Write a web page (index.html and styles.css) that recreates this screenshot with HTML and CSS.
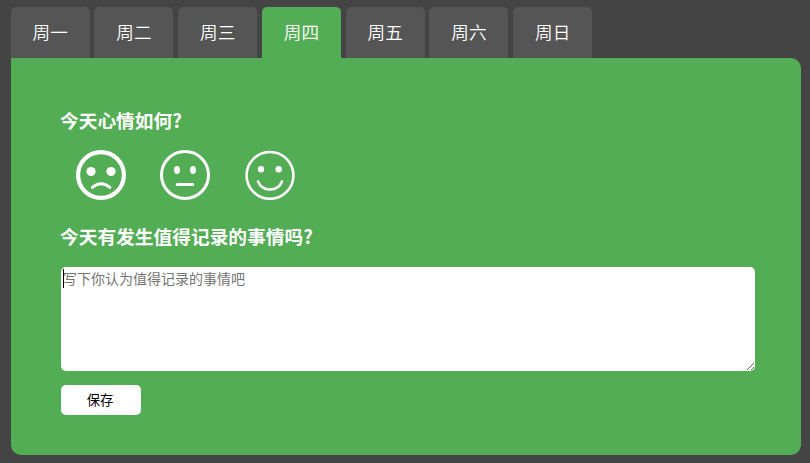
FILE: index.html
```
<!DOCTYPE html>
<html lang="zh-CN">
<head>
<meta charset="utf-8">
<title>一周日记</title>
<link rel="stylesheet" href="styles.css">
</head>
<body>
<nav class="tabs">
  <button class="tab">周一</button>
  <button class="tab">周二</button>
  <button class="tab">周三</button>
  <button class="tab active">周四</button>
  <button class="tab">周五</button>
  <button class="tab">周六</button>
  <button class="tab">周日</button>
</nav>
<main class="panel">
  <h3>今天心情如何?</h3>
  <div class="moods">
    <svg class="mood" viewBox="0 0 50 50">
      <circle class="line bold" cx="25" cy="25" r="22.9"/>
      <circle cx="15" cy="21.5" r="4.6"/>
      <circle cx="35" cy="21.5" r="4.6"/>
      <path class="line" d="M16.4 37.4Q25 30 33.9 37.4"/>
    </svg>
    <svg class="mood" viewBox="0 0 50 50">
      <circle class="line" cx="25" cy="25" r="23.5"/>
      <ellipse cx="17" cy="20" rx="3" ry="4"/>
      <ellipse cx="33" cy="20" rx="3" ry="4"/>
      <path class="line" d="M17.3 34.5H32.7"/>
    </svg>
    <svg class="mood" viewBox="0 0 50 50">
      <circle class="line thin" cx="25" cy="25.4" r="23.4"/>
      <circle cx="16" cy="19.3" r="3.2"/>
      <circle cx="33.7" cy="19.3" r="3.2"/>
      <path class="line thin" d="M13 31.4C17 42.2 33 42.2 37 31.4"/>
    </svg>
  </div>
  <h3>今天有发生值得记录的事情吗?</h3>
  <div class="entry">
    <textarea placeholder="写下你认为值得记录的事情吧"></textarea>
    <span class="caret"></span>
  </div>
  <button class="save">保存</button>
</main>
</body>
</html>
```
FILE: styles.css
```
* {
  box-sizing: border-box;
}
body {
  margin: 0;
  height: 463px;
  padding: 7px 9px 8px 11px;
  background: #444;
  overflow: hidden;
  display: flex;
  flex-direction: column;
  font-family: "Noto Sans CJK SC", sans-serif;
}
button {
  border: 0;
  font-family: inherit;
}
.tabs {
  display: flex;
  gap: 4.67px;
  height: 51px;
  margin-left: -0.4px;
}
.tab {
  flex: none;
  width: 79.1px;
  padding: 0 0 2px;
  border-radius: 5px 5px 0 0;
  background: #555;
  color: #fff;
  font-size: 17.6px;
  font-weight: 350;
}
.tab.active {
  background: #53ad54;
}
.panel {
  flex: 1;
  padding: 49px 46px 40px 50px;
  border-radius: 0 10px 10px 10px;
  border-top-left-radius: 0;
  background: #53ad54;
}
h3 {
  margin: 0 0 0 -1px;
  height: 25px;
  line-height: 25px;
  font-size: 18.72px;
  color: #fff;
}
.moods {
  display: flex;
  gap: 34px;
  margin: 18px 0 23px 15px;
}
.mood {
  width: 50px;
  height: 50px;
  fill: #fff;
}
.mood:last-child {
  margin-left: 1px;
}
.line {
  fill: none;
  stroke: #fff;
  stroke-width: 3;
  stroke-linecap: round;
}
.bold {
  stroke-width: 4.2;
}
.thin {
  stroke-width: 2.6;
}
.entry {
  position: relative;
  height: 104px;
  margin: 19px 0 14px;
}
textarea {
  display: block;
  width: 100%;
  height: 104px;
  padding: 2px;
  border: 0;
  border-radius: 5px;
  outline: 0;
  font: 14px/18px "Noto Sans CJK SC", sans-serif;
}
textarea::placeholder {
  color: #757575;
}
.caret {
  position: absolute;
  left: 2px;
  top: 2px;
  width: 1px;
  height: 19px;
  background: #000;
}
.save {
  display: block;
  width: 80px;
  height: 30px;
  padding: 0 2px 2px 0;
  border-radius: 5px;
  background: #fff;
  color: #000;
  font-size: 13.33px;
}
```
